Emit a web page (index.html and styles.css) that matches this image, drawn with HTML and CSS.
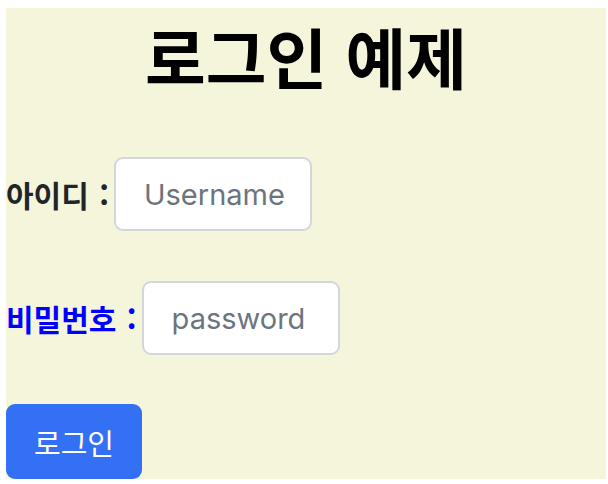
FILE: index.html
```html
<!DOCTYPE html>
<html lang="ko">
<head>
<meta charset="utf-8">
<title>로그인 예제</title>
<link rel="stylesheet" href="styles.css">
</head>
<body>
<div class="page">
  <h1 class="title">로그인 예제</h1>
  <form class="login">
    <div class="row">
      <label class="label" for="user">아이디 :</label>
      <input class="field" id="user" type="text" placeholder="Username">
    </div>
    <div class="row">
      <label class="label label-blue" for="pw">비밀번호 :</label>
      <input class="field" id="pw" type="password" placeholder="password">
    </div>
    <button class="btn" type="button">로그인</button>
  </form>
</div>
</body>
</html>
```
FILE: styles.css
```css
html, body {
  background: #ffffff;
}
body {
  margin: 8px 2px 0 6px;
  font-family: "Noto Sans CJK KR", "Noto Sans", sans-serif;
  color: #212529;
}
.page {
  background: #f5f5dc;
  display: flex;
  flex-direction: column;
}
.title {
  margin: 0;
  padding-top: 7px;
  font-size: 66px;
  line-height: 80px;
  font-weight: 700;
  color: #000;
  text-align: center;
}
.login {
  margin-top: 62px;
  display: flex;
  flex-direction: column;
  align-items: flex-start;
  gap: 50px;
}
.row {
  display: flex;
  align-items: center;
}
.label {
  font-size: 30px;
  font-weight: 700;
  margin-right: 5px;
  color: #212529;
  word-spacing: 2px;
}
.label-blue {
  color: #0000ff;
}
.field {
  box-sizing: border-box;
  width: 198px;
  height: 74px;
  padding: 0 6px 0 28px;
  border: 2px solid #d3d6da;
  border-radius: 9px;
  background: #fff;
  font-family: Inter, "Liberation Sans", sans-serif;
  font-size: 29px;
  color: #212529;
  outline: none;
}
.field::placeholder {
  color: #6c757d;
  opacity: 1;
}
.btn {
  margin-top: -1px;
  box-sizing: border-box;
  width: 136px;
  height: 75px;
  border: none;
  border-radius: 9px;
  background: #3470f4;
  color: #fff;
  font-family: "Noto Sans CJK KR", sans-serif;
  font-size: 29px;
  padding: 0;
}
```
